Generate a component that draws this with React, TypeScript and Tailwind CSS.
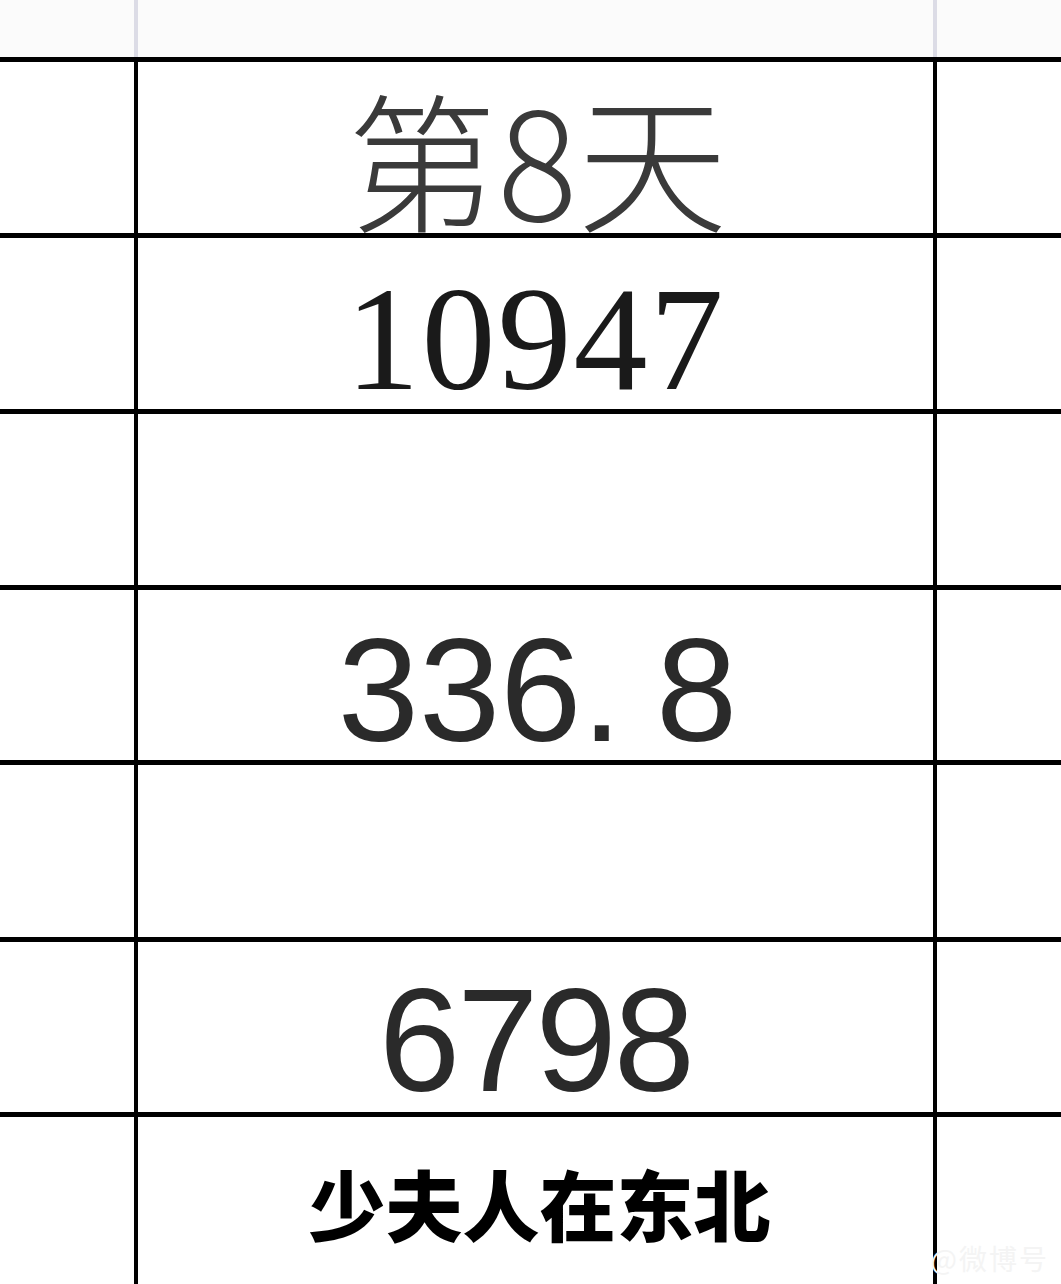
export default function App() {
  const cjk = { fontFamily: '"Noto Sans CJK SC", "Noto Sans", sans-serif' };
  const serif = { fontFamily: '"Liberation Serif", "Noto Sans CJK SC", serif' };
  const sans = { fontFamily: '"Liberation Sans", "Noto Sans CJK SC", sans-serif' };

  return (
    <div className="relative w-[1061px] h-[1284px] overflow-hidden bg-white text-black">
      {/* header strip */}
      <div className="grid grid-cols-[134px_803px_1fr] h-[57px] bg-[#fbfbfb]">
        <div />
        <div className="border-x-4 border-[#dcdce6]" />
        <div />
      </div>

      <div className="border-t-[5px] border-black">
        {/* row 1 */}
        <div className="grid grid-cols-[134px_803px_1fr] h-[176px] border-b-[5px] border-black">
          <div />
          <div className="border-x-4 border-black flex justify-center items-start pt-[19px] pl-[4px]">
            <span className="text-[150px] leading-none font-light text-[#3a3a3a]" style={cjk}>
              第8天
            </span>
          </div>
          <div />
        </div>

        {/* row 2 */}
        <div className="grid grid-cols-[134px_803px_1fr] h-[176px] border-b-[5px] border-black">
          <div />
          <div className="border-x-4 border-black flex justify-center items-start pt-[27px]">
            <span className="text-[148px] leading-none tracking-[2px] text-[#1a1a1a]" style={serif}>
              10947
            </span>
          </div>
          <div />
        </div>

        {/* row 3 */}
        <div className="grid grid-cols-[134px_803px_1fr] h-[176px] border-b-[5px] border-black">
          <div />
          <div className="border-x-4 border-black" />
          <div />
        </div>

        {/* row 4 */}
        <div className="grid grid-cols-[134px_803px_1fr] h-[175px] border-b-[5px] border-black">
          <div />
          <div className="border-x-4 border-black flex justify-center items-start pt-[28px] pl-[4px]">
            <span className="text-[146px] leading-none text-[#2a2a2a]" style={sans}>
              336.<span className="ml-[34px]">8</span>
            </span>
          </div>
          <div />
        </div>

        {/* row 5 */}
        <div className="grid grid-cols-[134px_803px_1fr] h-[177px] border-b-[5px] border-black">
          <div />
          <div className="border-x-4 border-black" />
          <div />
        </div>

        {/* row 6 */}
        <div className="grid grid-cols-[134px_803px_1fr] h-[175px] border-b-[5px] border-black">
          <div />
          <div className="border-x-4 border-black flex justify-center items-start pt-[26px]">
            <span className="text-[146px] leading-none tracking-[-3px] text-[#2a2a2a]" style={sans}>
              6798
            </span>
          </div>
          <div />
        </div>

        {/* row 7 */}
        <div className="grid grid-cols-[134px_803px_1fr] h-[200px]">
          <div />
          <div className="border-x-4 border-black flex justify-center items-start pt-[47px] pl-[8px]">
            <span className="text-[77px] leading-none font-black text-black" style={cjk}>
              少夫人在东北
            </span>
          </div>
          <div />
        </div>
      </div>

      {/* watermark */}
      <div
        className="absolute right-[12px] bottom-[12px] text-[28px] leading-none text-[#f4f4f4] tracking-[2px]"
        style={cjk}
      >
        @微博号
      </div>
    </div>
  );
}
